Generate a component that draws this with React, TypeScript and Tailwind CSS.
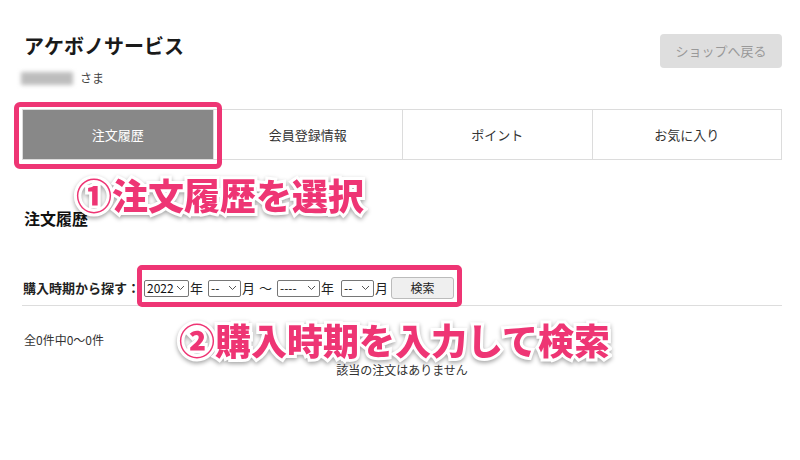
import React from "react";

const jp = { fontFamily: '"Noto Sans CJK JP", "Noto Sans", sans-serif' };

function Chevron() {
  return (
    <svg width="9" height="6" viewBox="0 0 9 6" className="shrink-0">
      <path d="M1 1 L4.5 4.5 L8 1" fill="none" stroke="#555" strokeWidth="1" />
    </svg>
  );
}

function Sel({ label, w }: { label: string; w: string }) {
  return (
    <div
      className={`${w} h-[17px] flex items-center justify-between border border-[#767676] rounded-[2px] bg-white pl-[2px] pr-[3px] text-[12px] leading-none text-[#111]`}
    >
      <span>{label}</span>
      <Chevron />
    </div>
  );
}

const annot =
  "absolute whitespace-nowrap font-black text-[#ee3574] leading-none [-webkit-text-stroke:6px_white] [paint-order:stroke_fill] [filter:drop-shadow(0_2px_2px_rgba(0,0,0,0.35))]";

export default function App() {
  const tabs = ["注文履歴", "会員登録情報", "ポイント", "お気に入り"];
  return (
    <div className="relative w-[800px] h-[460px] bg-white overflow-hidden text-[#222]" style={jp}>
      <div className="pl-[22px] pr-[18px]">
        <div className="flex justify-between items-start pt-[34px]">
          <div>
            <h1 className="text-[20px] leading-[24px] font-bold text-[#1a1a1a] ml-[2px]">アケボノサービス</h1>
            <div className="flex items-center mt-[12px] h-[16px]">
              <span className="w-[52px] h-[13px] -ml-[1px] bg-[#bdbdbd] blur-[2px]" />
              <span className="text-[12px] ml-[7px] text-[#444]">さま</span>
            </div>
          </div>
          <button className="w-[122px] h-[34px] rounded-[4px] bg-[#dedede] text-[#999] text-[13px]">
            ショップへ戻る
          </button>
        </div>

        <div className="grid grid-cols-4 mt-[23px] h-[51px] border border-[#dcdcdc]">
          {tabs.map((t, i) => (
            <div
              key={t}
              className={
                i === 0
                  ? "flex items-center justify-center bg-[#888888] text-white text-[13px]"
                  : "flex items-center justify-center border-l border-[#dcdcdc] text-[#333] text-[13px]"
              }
            >
              {t}
            </div>
          ))}
        </div>

        <h2 className="mt-[48px] ml-[2px] text-[16px] leading-[20px] font-bold text-[#111]">注文履歴</h2>

        <div className="flex items-center mt-[49px] h-[22px] text-[13px] text-[#222]">
          <span className="ml-[1px] font-bold w-[121px]">購入時期から探す：</span>
          <Sel label="2022" w="w-[45px]" />
          <span className="ml-[1px]">年</span>
          <div className="ml-[5px]">
            <Sel label="--" w="w-[33px]" />
          </div>
          <span className="ml-[1px]">月</span>
          <span className="ml-[4px]">～</span>
          <div className="ml-[5px]">
            <Sel label="----" w="w-[43px]" />
          </div>
          <span className="ml-[1px]">年</span>
          <div className="ml-[7px]">
            <Sel label="--" w="w-[33px]" />
          </div>
          <span className="ml-[1px]">月</span>
          <button className="ml-[3px] w-[63px] h-[22px] bg-[#efefef] border border-[#bbbbbb] rounded-[3px] text-[12px] text-[#222]">
            検索
          </button>
        </div>

        <div className="mt-[6px] border-t border-[#dddddd]" />

        <p className="mt-[27px] ml-[2px] text-[12px] leading-[14px] text-[#333]">全0件中0～0件</p>
        <p className="mt-[16px] text-center text-[12px] leading-[14px] text-[#333]">該当の注文はありません</p>
      </div>

      {/* highlight boxes */}
      <div className="absolute left-[14px] top-[102px] w-[208px] h-[67px] border-[5px] border-[#ee3574] rounded-[6px]" />
      <div className="absolute left-[137px] top-[265px] w-[325px] h-[42px] border-[5px] border-[#ee3574] rounded-[5px]" />

      {/* annotations */}
      <div className={`${annot} left-[76px] top-[176px] text-[36px]`}>①注文履歴を選択</div>
      <div className={`${annot} left-[179px] top-[321px] text-[36px]`}>②購入時期を入力して検索</div>
    </div>
  );
}
